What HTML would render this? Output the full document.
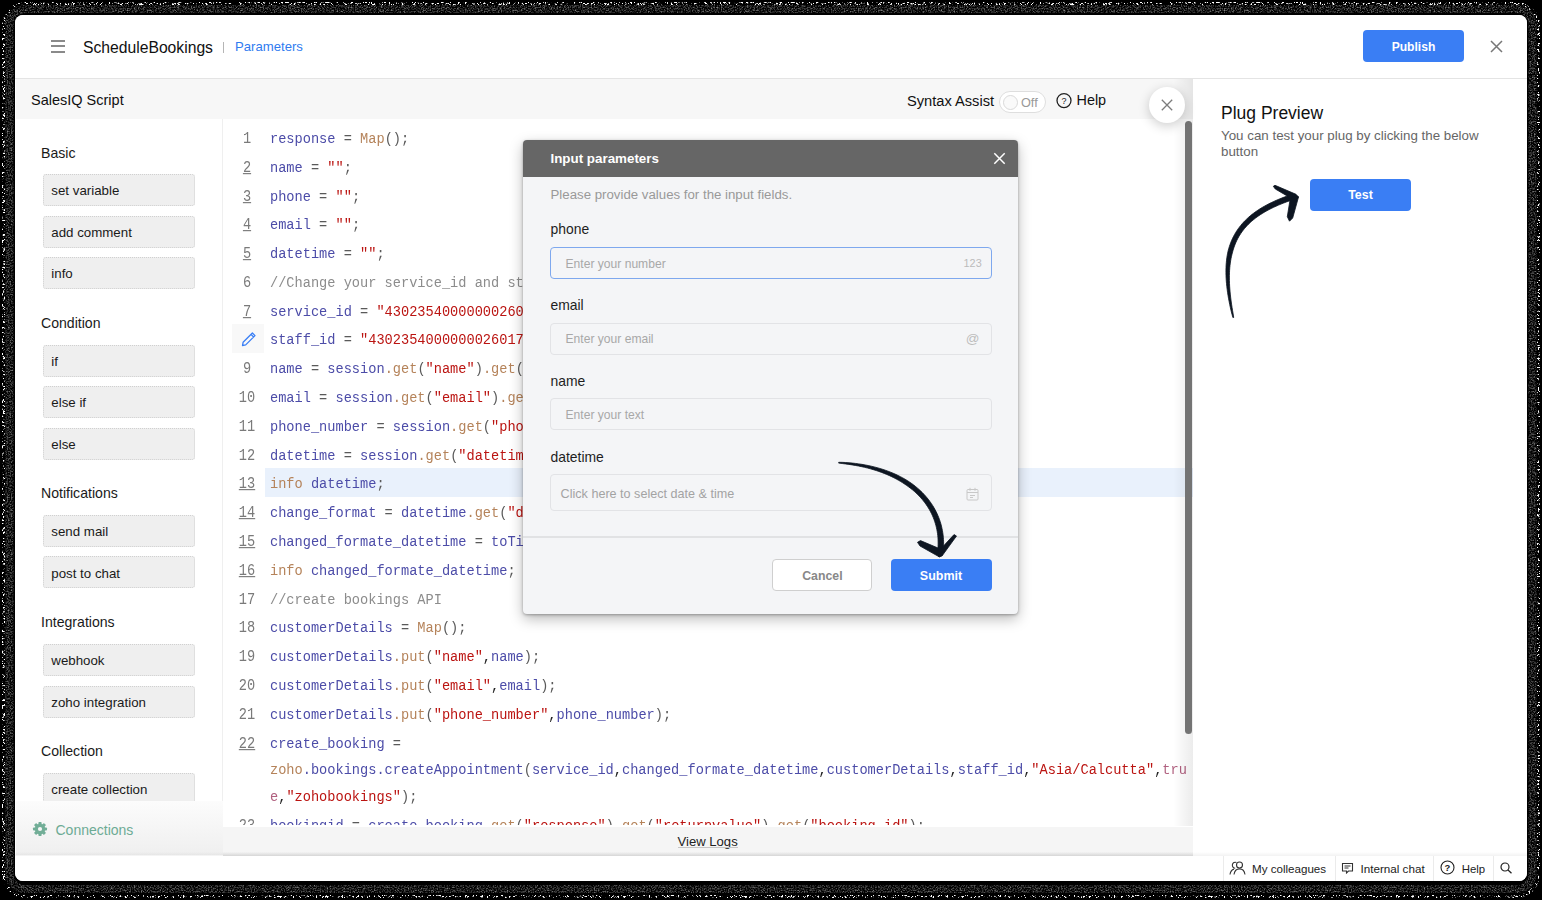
<!DOCTYPE html>
<html><head><meta charset="utf-8">
<style>
*{box-sizing:border-box;margin:0;padding:0}
html,body{width:1542px;height:900px;overflow:hidden;background:#000;font-family:"Liberation Sans",sans-serif;color:#111}
.a{position:absolute;white-space:nowrap}
#ring{position:absolute;left:1px;top:1px;width:1540px;height:898px;border-radius:22px;background:#5a5a5a}
#ring2{position:absolute;left:5px;top:5px;width:1532px;height:890px;border-radius:18px;background:#151515}
#ring3{position:absolute;left:13px;top:13px;width:1516px;height:870px;border-radius:12px;background:#000}
#W{position:absolute;left:0;top:0;width:1542px;height:900px;clip-path:inset(15px 15px 19px 15px round 8px);background:#fff}
.ln{position:absolute;left:0;width:48px;text-align:center;font:13.65px/20px "Liberation Mono",monospace;color:#7a7a7a;transform:scaleY(1.15);transform-origin:0 13.64px}
.ln.u{text-decoration:underline;text-underline-offset:1px}
.cl{position:absolute;left:47px;font:13.65px/20px "Liberation Mono",monospace;color:#5a5a5a;white-space:pre;transform:scaleY(1.13);transform-origin:0 13.64px}
.hl{background:#e9f1fc}
.pen{background:#f8f8f8}
.v{color:#4c4ca8}.s{color:#bb1411}.f{color:#b5835a}.c{color:#8c8c8c}.k{color:#b0607f}.p{color:#5a5a5a}.cm{color:#222}

</style></head>
<body>
<svg style="position:absolute;left:0;top:0" width="1542" height="900" viewBox="0 0 1542 900">
<defs>
<filter id="spk" x="0" y="0" width="1542" height="900" filterUnits="userSpaceOnUse" color-interpolation-filters="sRGB">
<feTurbulence type="fractalNoise" baseFrequency="0.55" numOctaves="2" seed="7" result="t"/>
<feColorMatrix in="t" type="matrix" values="0 0 0 0 1  0 0 0 0 1  0 0 0 0 1  10 0 0 0 -5.6" result="w"/>
<feComposite in="w" in2="SourceGraphic" operator="in"/>
</filter>
<filter id="drk" x="0" y="0" width="1542" height="900" filterUnits="userSpaceOnUse" color-interpolation-filters="sRGB">
<feTurbulence type="fractalNoise" baseFrequency="0.7" numOctaves="2" seed="11" result="t"/>
<feColorMatrix in="t" type="matrix" values="0 0 0 0 1  0 0 0 0 1  0 0 0 0 1  1.1 0 0 0 -0.45" result="w"/>
<feComposite in="w" in2="SourceGraphic" operator="in"/>
</filter>
</defs>
<rect x="3.5" y="3.5" width="1535" height="893" rx="22" fill="none" stroke="#fff" stroke-width="3" filter="url(#spk)"/>
<rect x="9.5" y="9" width="1523" height="880" rx="16" fill="none" stroke="#fff" stroke-width="8" filter="url(#drk)"/>
</svg>

<div id="W">
<div class="a" style="left:15px;top:15px;width:1512px;height:63px;background:#fff"></div>
<div class="a" style="left:15px;top:78px;width:1512px;height:1px;background:#e4e4e4"></div>
<div class="a" style="left:51px;top:40px;width:14px;height:2px;background:#8a8a8a"></div>
<div class="a" style="left:51px;top:45.3px;width:14px;height:2px;background:#8a8a8a"></div>
<div class="a" style="left:51px;top:50.7px;width:14px;height:2px;background:#8a8a8a"></div>
<div class="a" style="left:83px;top:38.16px;font-size:15.7px;line-height:20px;color:#111;font-weight:normal;font-family:"Liberation Sans";-webkit-text-stroke:0.25px #111">ScheduleBookings</div>
<div class="a" style="left:223px;top:42px;width:1px;height:11px;background:#b5b5b5"></div>
<div class="a" style="left:235px;top:37.24px;font-size:13.15px;line-height:20px;color:#2f7bf0;font-weight:normal;font-family:"Liberation Sans";">Parameters</div>
<div class="a" style="left:1363px;top:30px;width:101px;height:32px;background:#3a7ef4;border-radius:4px"></div>
<div class="a" style="left:1263.5px;width:300px;text-align:center;top:36.71px;font-size:12.1px;line-height:20px;color:#fff;font-weight:bold;">Publish</div>
<svg class="a" style="left:1490px;top:40px" width="13" height="13" viewBox="0 0 13 13"><path d="M1 1L12 12M12 1L1 12" stroke="#777" stroke-width="1.5"/></svg>
<div class="a" style="left:16px;top:79px;width:1177px;height:40px;background:#f7f7f7"></div>
<div class="a" style="left:31px;top:89.78px;font-size:14.5px;line-height:20px;color:#111;font-weight:normal;font-family:"Liberation Sans";">SalesIQ Script</div>
<div class="a" style="left:907px;top:91.02px;font-size:14.65px;line-height:20px;color:#111;font-weight:normal;font-family:"Liberation Sans";">Syntax Assist</div>
<div class="a" style="left:999px;top:91px;width:47px;height:22px;border:1px solid #dedede;border-radius:11px;background:#fff"></div>
<div class="a" style="left:1002.5px;top:94.5px;width:15px;height:15px;border:1px solid #d9d9d9;border-radius:50%;background:#fafafa"></div>
<div class="a" style="left:1021px;top:92.80px;font-size:12.7px;line-height:20px;color:#999;font-weight:normal;font-family:"Liberation Sans";">Off</div>
<svg class="a" style="left:1055px;top:92px" width="18" height="18" viewBox="0 0 18 18"><circle cx="9" cy="8.6" r="7" fill="none" stroke="#222" stroke-width="1.3"/><text x="9" y="11.8" text-anchor="middle" font-family="Liberation Sans" font-size="9" fill="#222">?</text></svg>
<div class="a" style="left:1076.5px;top:90.21px;font-size:14.4px;line-height:20px;color:#111;font-weight:normal;font-family:"Liberation Sans";">Help</div>
<div class="a" style="left:16px;top:119px;width:207px;height:736px;background:#fff"></div>
<div class="a" style="left:222px;top:119px;width:1px;height:707px;background:#efefef"></div>
<div class="a" style="left:41px;top:143.21px;font-size:14.1px;line-height:20px;color:#1a1a1a;font-weight:normal;font-family:"Liberation Sans";">Basic</div>
<div class="a" style="left:43px;top:174px;width:152px;height:32px;background:#efefef;border:1px dotted #d0d0d0;border-radius:3px"></div>
<div class="a" style="left:51.3px;top:181.19px;font-size:13.3px;line-height:20px;color:#1a1a1a;font-weight:normal;font-family:"Liberation Sans";">set variable</div>
<div class="a" style="left:43px;top:216px;width:152px;height:32px;background:#efefef;border:1px dotted #d0d0d0;border-radius:3px"></div>
<div class="a" style="left:51.3px;top:222.69px;font-size:13.3px;line-height:20px;color:#1a1a1a;font-weight:normal;font-family:"Liberation Sans";">add comment</div>
<div class="a" style="left:43px;top:257px;width:152px;height:32px;background:#efefef;border:1px dotted #d0d0d0;border-radius:3px"></div>
<div class="a" style="left:51.3px;top:264.19px;font-size:13.3px;line-height:20px;color:#1a1a1a;font-weight:normal;font-family:"Liberation Sans";">info</div>
<div class="a" style="left:41px;top:312.71px;font-size:14.1px;line-height:20px;color:#1a1a1a;font-weight:normal;font-family:"Liberation Sans";">Condition</div>
<div class="a" style="left:43px;top:345px;width:152px;height:32px;background:#efefef;border:1px dotted #d0d0d0;border-radius:3px"></div>
<div class="a" style="left:51.3px;top:351.69px;font-size:13.3px;line-height:20px;color:#1a1a1a;font-weight:normal;font-family:"Liberation Sans";">if</div>
<div class="a" style="left:43px;top:386px;width:152px;height:32px;background:#efefef;border:1px dotted #d0d0d0;border-radius:3px"></div>
<div class="a" style="left:51.3px;top:393.19px;font-size:13.3px;line-height:20px;color:#1a1a1a;font-weight:normal;font-family:"Liberation Sans";">else if</div>
<div class="a" style="left:43px;top:428px;width:152px;height:32px;background:#efefef;border:1px dotted #d0d0d0;border-radius:3px"></div>
<div class="a" style="left:51.3px;top:434.69px;font-size:13.3px;line-height:20px;color:#1a1a1a;font-weight:normal;font-family:"Liberation Sans";">else</div>
<div class="a" style="left:41px;top:483.31px;font-size:14.1px;line-height:20px;color:#1a1a1a;font-weight:normal;font-family:"Liberation Sans";">Notifications</div>
<div class="a" style="left:43px;top:515px;width:152px;height:32px;background:#efefef;border:1px dotted #d0d0d0;border-radius:3px"></div>
<div class="a" style="left:51.3px;top:522.19px;font-size:13.3px;line-height:20px;color:#1a1a1a;font-weight:normal;font-family:"Liberation Sans";">send mail</div>
<div class="a" style="left:43px;top:556px;width:152px;height:32px;background:#efefef;border:1px dotted #d0d0d0;border-radius:3px"></div>
<div class="a" style="left:51.3px;top:563.69px;font-size:13.3px;line-height:20px;color:#1a1a1a;font-weight:normal;font-family:"Liberation Sans";">post to chat</div>
<div class="a" style="left:41px;top:612.01px;font-size:14.1px;line-height:20px;color:#1a1a1a;font-weight:normal;font-family:"Liberation Sans";">Integrations</div>
<div class="a" style="left:43px;top:644px;width:152px;height:32px;background:#efefef;border:1px dotted #d0d0d0;border-radius:3px"></div>
<div class="a" style="left:51.3px;top:651.19px;font-size:13.3px;line-height:20px;color:#1a1a1a;font-weight:normal;font-family:"Liberation Sans";">webhook</div>
<div class="a" style="left:43px;top:686px;width:152px;height:32px;background:#efefef;border:1px dotted #d0d0d0;border-radius:3px"></div>
<div class="a" style="left:51.3px;top:692.69px;font-size:13.3px;line-height:20px;color:#1a1a1a;font-weight:normal;font-family:"Liberation Sans";">zoho integration</div>
<div class="a" style="left:41px;top:741.11px;font-size:14.1px;line-height:20px;color:#1a1a1a;font-weight:normal;font-family:"Liberation Sans";">Collection</div>
<div class="a" style="left:43px;top:773px;width:152px;height:32px;background:#efefef;border:1px dotted #d0d0d0;border-radius:3px"></div>
<div class="a" style="left:51.3px;top:780.19px;font-size:13.3px;line-height:20px;color:#1a1a1a;font-weight:normal;font-family:"Liberation Sans";">create collection</div>
<div class="a" style="left:16px;top:801px;width:207px;height:54px;background:linear-gradient(#fcfcfc,#efefef)"></div>
<svg class="a" style="left:32px;top:821px" width="16" height="16" viewBox="0 0 16 16"><g transform="translate(8 8)" fill="#72ae97"><circle r="5.2"/><rect x="-1.6" y="-7" width="3.2" height="3.4" rx="0.8" transform="rotate(0)"/><rect x="-1.6" y="-7" width="3.2" height="3.4" rx="0.8" transform="rotate(45)"/><rect x="-1.6" y="-7" width="3.2" height="3.4" rx="0.8" transform="rotate(90)"/><rect x="-1.6" y="-7" width="3.2" height="3.4" rx="0.8" transform="rotate(135)"/><rect x="-1.6" y="-7" width="3.2" height="3.4" rx="0.8" transform="rotate(180)"/><rect x="-1.6" y="-7" width="3.2" height="3.4" rx="0.8" transform="rotate(225)"/><rect x="-1.6" y="-7" width="3.2" height="3.4" rx="0.8" transform="rotate(270)"/><rect x="-1.6" y="-7" width="3.2" height="3.4" rx="0.8" transform="rotate(315)"/><circle r="2.1" fill="#f6f6f6"/></g></svg>
<div class="a" style="left:55.5px;top:820.15px;font-size:14px;line-height:20px;color:#6dab94;font-weight:normal;font-family:"Liberation Sans";">Connections</div>
<div class="a" id="code" style="left:223px;top:119px;width:970px;height:706px;overflow:hidden;background:#fff"><div class="a hl" style="left:42px;top:349px;width:928px;height:29px"></div>
<div class="a pen" style="left:9px;top:205px;width:32px;height:29px"><svg width="32" height="29" viewBox="0 0 32 29"><path d="M10.5 21.5l0.6-3.2 9.3-9.3 2.6 2.6-9.3 9.3z M19 10.4l2.6 2.6" fill="none" stroke="#3a7ff5" stroke-width="1.3" stroke-linejoin="round"/></svg></div>
<div class="a ln" style="top:10.96px">1</div>
<div class="a cl" style="top:10.96px"><span class="v">response</span><span class="p"> = </span><span class="f">Map</span><span class="p">();</span></div>
<div class="a ln u" style="top:39.75px">2</div>
<div class="a cl" style="top:39.75px"><span class="v">name</span><span class="p"> = </span><span class="s">&quot;&quot;</span><span class="p">;</span></div>
<div class="a ln u" style="top:68.54px">3</div>
<div class="a cl" style="top:68.54px"><span class="v">phone</span><span class="p"> = </span><span class="s">&quot;&quot;</span><span class="p">;</span></div>
<div class="a ln u" style="top:97.33px">4</div>
<div class="a cl" style="top:97.33px"><span class="v">email</span><span class="p"> = </span><span class="s">&quot;&quot;</span><span class="p">;</span></div>
<div class="a ln u" style="top:126.12px">5</div>
<div class="a cl" style="top:126.12px"><span class="v">datetime</span><span class="p"> = </span><span class="s">&quot;&quot;</span><span class="p">;</span></div>
<div class="a ln" style="top:154.91px">6</div>
<div class="a cl" style="top:154.91px"><span class="c">//Change your service_id and staff_id</span></div>
<div class="a ln u" style="top:183.70px">7</div>
<div class="a cl" style="top:183.70px"><span class="v">service_id</span><span class="p"> = </span><span class="s">&quot;43023540000000260535&quot;</span><span class="p">;</span></div>
<div class="a cl" style="top:212.49px"><span class="v">staff_id</span><span class="p"> = </span><span class="s">&quot;4302354000000026017&quot;</span><span class="p">;</span></div>
<div class="a ln" style="top:241.28px">9</div>
<div class="a cl" style="top:241.28px"><span class="v">name</span><span class="p"> = </span><span class="v">session</span><span class="f">.get</span><span class="p">(</span><span class="s">&quot;name&quot;</span><span class="p">)</span><span class="f">.get</span><span class="p">(</span><span class="s">&quot;value&quot;</span><span class="p">);</span></div>
<div class="a ln" style="top:270.07px">10</div>
<div class="a cl" style="top:270.07px"><span class="v">email</span><span class="p"> = </span><span class="v">session</span><span class="f">.get</span><span class="p">(</span><span class="s">&quot;email&quot;</span><span class="p">)</span><span class="f">.get</span><span class="p">(</span><span class="s">&quot;value&quot;</span><span class="p">);</span></div>
<div class="a ln" style="top:298.86px">11</div>
<div class="a cl" style="top:298.86px"><span class="v">phone_number</span><span class="p"> = </span><span class="v">session</span><span class="f">.get</span><span class="p">(</span><span class="s">&quot;phone&quot;</span><span class="p">)</span><span class="f">.get</span><span class="p">(</span><span class="s">&quot;value&quot;</span><span class="p">);</span></div>
<div class="a ln" style="top:327.65px">12</div>
<div class="a cl" style="top:327.65px"><span class="v">datetime</span><span class="p"> = </span><span class="v">session</span><span class="f">.get</span><span class="p">(</span><span class="s">&quot;datetime&quot;</span><span class="p">)</span><span class="f">.get</span><span class="p">(</span><span class="s">&quot;value&quot;</span><span class="p">);</span></div>
<div class="a ln u" style="top:356.44px">13</div>
<div class="a cl" style="top:356.44px"><span class="f">info</span><span class="p"> </span><span class="v">datetime</span><span class="p">;</span></div>
<div class="a ln u" style="top:385.23px">14</div>
<div class="a cl" style="top:385.23px"><span class="v">change_format</span><span class="p"> = </span><span class="v">datetime</span><span class="f">.get</span><span class="p">(</span><span class="s">&quot;date_time&quot;</span><span class="p">);</span></div>
<div class="a ln u" style="top:414.02px">15</div>
<div class="a cl" style="top:414.02px"><span class="v">changed_formate_datetime</span><span class="p"> = </span><span class="v">toTime</span><span class="p">(</span><span class="v">change_format</span><span class="cm">,</span><span class="s">&quot;yyyy-MM-dd HH:mm:ss&quot;</span><span class="p">);</span></div>
<div class="a ln u" style="top:442.81px">16</div>
<div class="a cl" style="top:442.81px"><span class="f">info</span><span class="p"> </span><span class="v">changed_formate_datetime</span><span class="p">;</span></div>
<div class="a ln" style="top:471.60px">17</div>
<div class="a cl" style="top:471.60px"><span class="c">//create bookings API</span></div>
<div class="a ln" style="top:500.39px">18</div>
<div class="a cl" style="top:500.39px"><span class="v">customerDetails</span><span class="p"> = </span><span class="f">Map</span><span class="p">();</span></div>
<div class="a ln" style="top:529.18px">19</div>
<div class="a cl" style="top:529.18px"><span class="v">customerDetails</span><span class="f">.put</span><span class="p">(</span><span class="s">&quot;name&quot;</span><span class="cm">,</span><span class="v">name</span><span class="p">);</span></div>
<div class="a ln" style="top:557.97px">20</div>
<div class="a cl" style="top:557.97px"><span class="v">customerDetails</span><span class="f">.put</span><span class="p">(</span><span class="s">&quot;email&quot;</span><span class="cm">,</span><span class="v">email</span><span class="p">);</span></div>
<div class="a ln" style="top:586.76px">21</div>
<div class="a cl" style="top:586.76px"><span class="v">customerDetails</span><span class="f">.put</span><span class="p">(</span><span class="s">&quot;phone_number&quot;</span><span class="cm">,</span><span class="v">phone_number</span><span class="p">);</span></div>
<div class="a ln u" style="top:615.55px">22</div>
<div class="a cl" style="top:615.55px"><span class="v">create_booking</span><span class="p"> =</span></div>
<div class="a cl" style="top:642.25px"><span class="f">zoho</span><span class="v">.bookings.createAppointment</span><span class="p">(</span><span class="v">service_id</span><span class="cm">,</span><span class="v">changed_formate_datetime</span><span class="cm">,</span><span class="v">customerDetails</span><span class="cm">,</span><span class="v">staff_id</span><span class="cm">,</span><span class="s">&quot;Asia/Calcutta&quot;</span><span class="cm">,</span><span class="k">tru</span></div>
<div class="a cl" style="top:668.95px"><span class="k">e</span><span class="cm">,</span><span class="s">&quot;zohobookings&quot;</span><span class="p">);</span></div>
<div class="a ln" style="top:698.24px">23</div>
<div class="a cl" style="top:698.24px"><span class="v">bookingid</span><span class="p"> = </span><span class="v">create_booking</span><span class="f">.get</span><span class="p">(</span><span class="s">&quot;response&quot;</span><span class="p">)</span><span class="f">.get</span><span class="p">(</span><span class="s">&quot;returnvalue&quot;</span><span class="p">)</span><span class="f">.get</span><span class="p">(</span><span class="s">&quot;booking_id&quot;</span><span class="p">);</span></div></div>
<div class="a" style="left:223px;top:826.5px;width:970px;height:29px;background:linear-gradient(#f5f5f5 85%,#e2e2e2)"></div>
<div class="a" style="left:677.5px;top:831.96px;font-size:13.1px;line-height:20px;color:#222;font-weight:normal;font-family:"Liberation Sans";">View Logs</div>
<div class="a" style="left:678px;top:847px;width:60px;height:1px;background:#c6c6c6"></div>
<div class="a" style="left:1193px;top:79px;width:334px;height:777px;background:#fff"></div>
<div class="a" style="left:1173px;top:79px;width:20px;height:747px;background:linear-gradient(90deg,rgba(0,0,0,0),rgba(0,0,0,0.075))"></div>
<div class="a" style="left:1185px;top:121px;width:7px;height:613px;border-radius:3.5px;background:#747474"></div>
<div class="a" style="left:1221px;top:102.74px;font-size:17.5px;line-height:20px;color:#111;font-weight:normal;font-family:"Liberation Sans";-webkit-text-stroke:0.5px #111">Plug Preview</div>
<div class="a" style="left:1221px;top:126.37px;font-size:13.35px;line-height:20px;color:#666;font-weight:normal;font-family:"Liberation Sans";">You can test your plug by clicking the below</div>
<div class="a" style="left:1221px;top:142.17px;font-size:13.35px;line-height:20px;color:#666;font-weight:normal;font-family:"Liberation Sans";">button</div>
<div class="a" style="left:1310px;top:178.5px;width:101px;height:32px;background:#3a7ef4;border-radius:4px"></div>
<div class="a" style="left:1210.5px;width:300px;text-align:center;top:184.60px;font-size:12.4px;line-height:20px;color:#fff;font-weight:bold;">Test</div>
<div class="a" style="left:1149px;top:87px;width:36px;height:36px;border-radius:50%;background:#fff;box-shadow:0 3px 12px rgba(0,0,0,0.2)"></div>
<svg class="a" style="left:1161px;top:99px" width="12" height="12" viewBox="0 0 12 12"><path d="M0.8 0.8L11.2 11.2M11.2 0.8L0.8 11.2" stroke="#7c7c7c" stroke-width="1.3"/></svg>
<div class="a" style="left:15px;top:852px;width:1512px;height:4px;background:linear-gradient(rgba(0,0,0,0),rgba(0,0,0,0.05))"></div>
<div class="a" style="left:15px;top:856px;width:1512px;height:25px;background:#fff"></div>
<div class="a" style="left:1222.5px;top:856px;width:1px;height:25px;background:#ebebeb"></div>
<div class="a" style="left:1334.5px;top:856px;width:1px;height:25px;background:#ebebeb"></div>
<div class="a" style="left:1432.5px;top:856px;width:1px;height:25px;background:#ebebeb"></div>
<div class="a" style="left:1492.5px;top:856px;width:1px;height:25px;background:#ebebeb"></div>
<svg class="a" style="left:1229px;top:861px" width="17" height="14" viewBox="0 0 17 14"><g fill="none" stroke="#333" stroke-width="1.1"><circle cx="10.5" cy="4" r="3"/><path d="M5 13.5c0.5-3.5 2.8-5.6 5.5-5.6s5 2.1 5.5 5.6"/><path d="M6.2 7.2a3 3 0 1 1 1.2-5.8"/><path d="M1 13.5c0.4-3 1.8-4.8 4-5.4"/></g></svg>
<div class="a" style="left:1252px;top:859.18px;font-size:11.6px;line-height:20px;color:#222;font-weight:normal;font-family:"Liberation Sans";-webkit-text-stroke:0.15px #222">My colleagues</div>
<svg class="a" style="left:1341px;top:862px" width="13" height="13" viewBox="0 0 13 13"><g fill="none" stroke="#333" stroke-width="1.1"><path d="M1.5 1.5h10v7.5h-4l-2 2v-2h-4z"/><path d="M3.5 4h6M3.5 6h4"/></g></svg>
<div class="a" style="left:1360.4px;top:859.35px;font-size:11.7px;line-height:20px;color:#222;font-weight:normal;font-family:"Liberation Sans";-webkit-text-stroke:0.15px #222">Internal chat</div>
<svg class="a" style="left:1439.5px;top:860px" width="15" height="15" viewBox="0 0 15 15"><circle cx="7.5" cy="7.5" r="6.5" fill="none" stroke="#222" stroke-width="1.1"/><text x="7.5" y="11" text-anchor="middle" font-family="Liberation Sans" font-size="9.5" font-weight="bold" fill="#222">?</text></svg>
<div class="a" style="left:1461.7px;top:859.45px;font-size:11.4px;line-height:20px;color:#222;font-weight:normal;font-family:"Liberation Sans";-webkit-text-stroke:0.15px #222">Help</div>
<svg class="a" style="left:1500px;top:862px" width="13" height="12" viewBox="0 0 13 12"><circle cx="5" cy="5" r="4" fill="none" stroke="#222" stroke-width="1.2"/><path d="M8 8l3.5 3.2" stroke="#222" stroke-width="1.3"/></svg>
<div class="a" style="left:523px;top:139.5px;width:495px;height:474px;background:#f4f5f7;border-radius:4px;box-shadow:0 1px 3px rgba(0,0,0,0.3),0 5px 14px rgba(0,0,0,0.27)"></div>
<div class="a" style="left:523px;top:139.5px;width:495px;height:37.5px;background:#666;border-radius:4px 4px 0 0"></div>
<div class="a" style="left:550.5px;top:149.47px;font-size:13.36px;line-height:20px;color:#fff;font-weight:bold;">Input parameters</div>
<svg class="a" style="left:993px;top:152px" width="13" height="13" viewBox="0 0 13 13"><path d="M1.3 1.3L11.7 11.7M11.7 1.3L1.3 11.7" stroke="#fff" stroke-width="1.5"/></svg>
<div class="a" style="left:550.5px;top:184.91px;font-size:13.25px;line-height:20px;color:#999;font-weight:normal;">Please provide values for the input fields.</div>
<div class="a" style="left:550.5px;top:219.28px;font-size:13.9px;line-height:20px;color:#1e1e1e;font-weight:normal;">phone</div>
<div class="a" style="left:550px;top:247.25px;width:441.5px;height:31.5px;border:1px solid #7ea8ee;border-radius:4px;background:#f4f5f7"></div>
<div class="a" style="left:565.5px;top:253.61px;font-size:12.1px;line-height:20px;color:#a8a8a8;font-weight:normal;">Enter your number</div>
<div class="a" style="left:550.5px;top:295.08px;font-size:13.9px;line-height:20px;color:#1e1e1e;font-weight:normal;">email</div>
<div class="a" style="left:550px;top:323px;width:441.5px;height:31.5px;border:1px solid #e2e3e6;border-radius:4px;background:#f4f5f7"></div>
<div class="a" style="left:565.5px;top:328.91px;font-size:12.1px;line-height:20px;color:#a8a8a8;font-weight:normal;">Enter your email</div>
<div class="a" style="left:550.5px;top:371.38px;font-size:13.9px;line-height:20px;color:#1e1e1e;font-weight:normal;">name</div>
<div class="a" style="left:550px;top:398.3px;width:441.5px;height:31.5px;border:1px solid #e2e3e6;border-radius:4px;background:#f4f5f7"></div>
<div class="a" style="left:565.5px;top:405.01px;font-size:12.1px;line-height:20px;color:#a8a8a8;font-weight:normal;">Enter your text</div>
<div class="a" style="left:550.5px;top:447.08px;font-size:13.9px;line-height:20px;color:#1e1e1e;font-weight:normal;">datetime</div>
<div class="a" style="left:550px;top:474.25px;width:441.5px;height:36.5px;border:1px solid #e2e3e6;border-radius:4px;background:#f4f5f7"></div>
<div class="a" style="left:560.6px;top:483.73px;font-size:12.6px;line-height:20px;color:#a3a3a3;font-weight:normal;">Click here to select date &amp; time</div>
<div class="a" style="left:963.6px;top:253.24px;font-size:10.85px;line-height:20px;color:#bbb;font-weight:normal;">123</div>
<div class="a" style="left:965.8px;top:329.32px;font-size:13.5px;line-height:20px;color:#bdbdbd;font-weight:normal;">@</div>
<svg class="a" style="left:966px;top:486.5px" width="13" height="14" viewBox="0 0 13 14"><g fill="none" stroke="#c8c8c8" stroke-width="1"><rect x="1" y="2.5" width="11" height="10.5" rx="1"/><path d="M1 5.5h11M4 0.8v3M9 0.8v3M4 8.5h5M4 10.5h3"/></g></svg>
<div class="a" style="left:523px;top:536px;width:495px;height:1.5px;background:#e1e2e4"></div>
<div class="a" style="left:772.3px;top:559.1px;width:100.2px;height:32.4px;background:#fff;border:1px solid #cfcfcf;border-radius:4px"></div>
<div class="a" style="left:672.4px;width:300px;text-align:center;top:566.04px;font-size:12.3px;line-height:20px;color:#888;font-weight:bold;">Cancel</div>
<div class="a" style="left:890.5px;top:559.1px;width:101px;height:32.4px;background:#3a7ef4;border-radius:4px"></div>
<div class="a" style="left:791px;width:300px;text-align:center;top:565.97px;font-size:12.5px;line-height:20px;color:#fff;font-weight:bold;">Submit</div>
<svg class="a" style="left:0;top:0" width="1542" height="900" viewBox="0 0 1542 900"><g fill="#0d1521" stroke="#0d1521" stroke-width="0.8" stroke-linejoin="round"><path d="M838.67,463.10 L842.12,463.53 L845.51,463.94 L848.84,464.40 L852.11,464.89 L855.32,465.43 L858.48,466.02 L861.57,466.65 L864.60,467.33 L867.57,468.06 L870.49,468.84 L873.34,469.66 L876.13,470.53 L878.86,471.44 L881.53,472.39 L884.14,473.39 L886.69,474.43 L889.17,475.51 L891.59,476.64 L893.96,477.80 L896.26,479.00 L898.49,480.25 L900.67,481.53 L902.78,482.84 L904.83,484.19 L906.84,485.55 L908.78,486.95 L910.67,488.38 L912.49,489.84 L914.25,491.34 L915.95,492.87 L917.58,494.44 L919.16,496.03 L920.67,497.66 L922.12,499.31 L923.51,501.00 L924.83,502.71 L926.09,504.45 L927.29,506.22 L928.43,508.01 L929.51,509.83 L930.52,511.68 L931.47,513.55 L932.36,515.44 L933.18,517.36 L933.94,519.30 L934.64,521.26 L935.27,523.24 L935.85,525.25 L936.35,527.27 L936.80,529.32 L937.18,531.38 L937.50,533.46 L937.75,535.56 L937.94,537.68 L938.06,539.82 L938.12,541.97 L938.12,544.14 L938.05,546.32 L937.91,548.52 L937.71,550.77 L943.29,551.23 L943.47,548.90 L943.58,546.54 L943.62,544.19 L943.59,541.86 L943.49,539.54 L943.32,537.24 L943.08,534.96 L942.78,532.70 L942.40,530.46 L941.95,528.24 L941.44,526.04 L940.86,523.86 L940.21,521.71 L939.49,519.58 L938.70,517.48 L937.85,515.40 L936.93,513.34 L935.94,511.32 L934.89,509.33 L933.77,507.36 L932.59,505.42 L931.34,503.52 L930.03,501.64 L928.65,499.80 L927.21,497.99 L925.70,496.22 L924.14,494.48 L922.50,492.78 L920.81,491.11 L919.05,489.48 L917.23,487.88 L915.35,486.33 L913.41,484.81 L911.41,483.33 L909.35,481.90 L907.22,480.50 L905.02,479.18 L902.76,477.90 L900.44,476.66 L898.06,475.47 L895.63,474.32 L893.14,473.23 L890.59,472.17 L887.98,471.17 L885.32,470.21 L882.60,469.30 L879.82,468.44 L876.99,467.63 L874.10,466.88 L871.16,466.17 L868.16,465.52 L865.11,464.92 L862.00,464.37 L858.84,463.88 L855.62,463.45 L852.35,463.08 L849.02,462.77 L845.65,462.52 L842.21,462.35 L838.73,462.30Z"/><path d="M917.5,542.3 L920.5,540.6 L938,548 L942.5,555 L939.5,557 L920,546Z"/><path d="M954,534.6 L956.5,536 L942,556 L938.5,556.5 L937.5,551 L943,546.5Z"/><path d="M1233.69,317.41 L1233.15,313.99 L1232.58,310.65 L1232.05,307.38 L1231.56,304.17 L1231.12,301.02 L1230.72,297.93 L1230.38,294.91 L1230.08,291.94 L1229.84,289.03 L1229.64,286.18 L1229.50,283.38 L1229.42,280.65 L1229.38,277.97 L1229.40,275.34 L1229.47,272.77 L1229.60,270.26 L1229.78,267.80 L1230.01,265.39 L1230.30,263.04 L1230.65,260.74 L1231.04,258.49 L1231.50,256.29 L1232.00,254.14 L1232.57,252.04 L1233.14,249.98 L1233.77,247.97 L1234.46,245.99 L1235.21,244.07 L1236.01,242.18 L1236.87,240.34 L1237.79,238.53 L1238.76,236.77 L1239.80,235.05 L1240.89,233.36 L1242.04,231.71 L1243.26,230.09 L1244.53,228.51 L1245.87,226.96 L1247.26,225.45 L1248.72,223.97 L1250.24,222.52 L1251.83,221.10 L1253.48,219.71 L1255.20,218.34 L1256.98,217.01 L1258.82,215.71 L1260.74,214.43 L1262.72,213.18 L1264.77,211.95 L1266.88,210.75 L1269.07,209.58 L1271.32,208.43 L1273.64,207.31 L1276.04,206.20 L1278.50,205.12 L1281.03,204.07 L1283.64,203.03 L1286.31,202.02 L1289.06,201.03 L1291.89,200.05 L1290.11,194.95 L1287.25,195.96 L1284.43,197.00 L1281.69,198.07 L1279.01,199.16 L1276.40,200.27 L1273.86,201.41 L1271.38,202.57 L1268.98,203.76 L1266.64,204.98 L1264.36,206.23 L1262.15,207.51 L1260.01,208.82 L1257.93,210.16 L1255.92,211.53 L1253.98,212.93 L1252.10,214.36 L1250.28,215.83 L1248.53,217.34 L1246.85,218.88 L1245.23,220.45 L1243.67,222.07 L1242.18,223.71 L1240.76,225.40 L1239.40,227.13 L1238.10,228.89 L1236.88,230.69 L1235.71,232.53 L1234.61,234.41 L1233.58,236.33 L1232.60,238.29 L1231.70,240.29 L1230.85,242.33 L1230.07,244.41 L1229.36,246.53 L1228.70,248.69 L1228.11,250.90 L1227.63,253.16 L1227.20,255.45 L1226.84,257.79 L1226.54,260.17 L1226.30,262.60 L1226.12,265.06 L1226.00,267.57 L1225.94,270.13 L1225.94,272.72 L1225.99,275.37 L1226.11,278.06 L1226.28,280.80 L1226.51,283.58 L1226.80,286.42 L1227.14,289.30 L1227.54,292.24 L1227.99,295.23 L1228.51,298.26 L1229.08,301.36 L1229.71,304.50 L1230.39,307.70 L1231.14,310.95 L1231.96,314.25 L1232.91,317.59Z"/><path d="M1273.3,186.3 L1275,185.3 L1296,194.3 L1298.5,197 L1291,201 L1286.7,195.7 L1275.3,189Z"/><path d="M1298.5,197 L1292.7,218 L1289.5,221.2 L1287.3,216.7 L1290,200 L1294,195Z"/></g></svg>
</div>
</body></html>
